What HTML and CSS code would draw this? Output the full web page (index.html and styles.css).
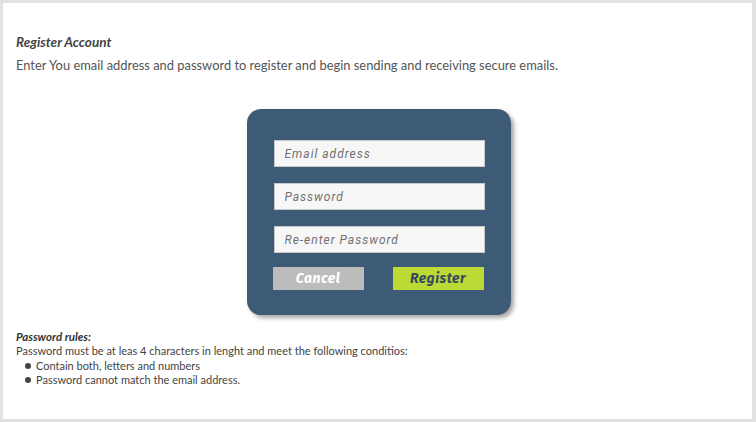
FILE: index.html
```html
<!DOCTYPE html>
<html>
<head>
<meta charset="utf-8">
<link rel="stylesheet" href="styles.css">
</head>
<body>
<div class="frame">
  <h1 class="title">Register Account</h1>
  <p class="intro">Enter You email address and password to register and begin sending and receiving secure emails.</p>
  <div class="card-wrap">
    <form class="card">
      <input class="field" type="text" placeholder="Email address">
      <input class="field" type="password" placeholder="Password">
      <input class="field" type="password" placeholder="Re-enter Password">
      <div class="actions">
        <button type="button" class="btn btn-cancel">Cancel</button>
        <button type="button" class="btn btn-register">Register</button>
      </div>
    </form>
  </div>
  <div class="rules">
    <h2 class="rules-title">Password rules:</h2>
    <p class="rules-text">Password must be at leas 4 characters in lenght and meet the following conditios:</p>
    <ul class="rules-list">
      <li>Contain both, letters and numbers</li>
      <li>Password cannot match the email address.</li>
    </ul>
  </div>
</div>
</body>
</html>
```
FILE: styles.css
```css
* { box-sizing: border-box; }
html, body { margin: 0; padding: 0; background: #fff; }
body { font-family: Lato, "Liberation Sans", sans-serif; color: #555; }
.frame {
  width: 756px;
  height: 422px;
  border: 3px solid #e2e2e2;
  border-right-width: 4px;
  padding: 31px 13px 0 13px;
}
.title {
  margin: 0;
  font-size: 13.5px;
  font-weight: 700;
  font-style: italic;
  color: #444;
  line-height: 17px;
}
.intro {
  margin: 6px 0 0;
  font-size: 12.9px;
  line-height: 17px;
  color: #555;
}
.card-wrap {
  display: flex;
  justify-content: center;
  margin-top: 35px;
  padding-left: 2px;
}
.card {
  width: 264px;
  height: 206px;
  background: #3d5a76;
  border-radius: 14px;
  box-shadow: 3px 3px 4px rgba(0,0,0,0.35);
  padding: 31px 26px 0 27px;
  display: flex;
  flex-direction: column;
  gap: 16px;
}
.field {
  display: block;
  width: 211px;
  height: 27px;
  margin: 0;
  border: 1px solid #c9c9c9;
  background: #f7f7f7;
  padding: 0 10px;
  font-family: Roboto, sans-serif;
  font-style: italic;
  font-size: 12px;
  letter-spacing: 1px;
  color: #666;
  outline: none;
}
.field::placeholder { color: #707070; opacity: 1; }
.actions {
  display: flex;
  justify-content: space-between;
  margin-top: -2px;
  margin-left: -1px;
  width: 211px;
}
.btn {
  width: 91px;
  height: 23px;
  border: none;
  padding: 0;
  font-family: "Fira Sans", Lato, sans-serif;
  font-style: italic;
  font-weight: 700;
  font-size: 14px;
  letter-spacing: 0.5px;
  cursor: pointer;
}
.btn-cancel { background: #bcbcbc; color: #fff; }
.btn-register { background: #bcda35; color: #3a4a5e; }
.rules {
  margin-top: 14px;
  font-size: 11px;
  line-height: 14.5px;
  color: #444;
}
.rules-title {
  margin: 0;
  font-size: 11.5px;
  font-weight: 700;
  font-style: italic;
  line-height: 15px;
  color: #333;
}
.rules-text { margin: 0; }
.rules-list {
  margin: 0;
  padding: 0 0 0 9px;
  list-style: none;
}
.rules-list li {
  display: flex;
  align-items: center;
  gap: 5px;
  line-height: 14.5px;
}
.rules-list li::before {
  content: "";
  width: 6px;
  height: 6px;
  border-radius: 50%;
  background: #444;
}
```
